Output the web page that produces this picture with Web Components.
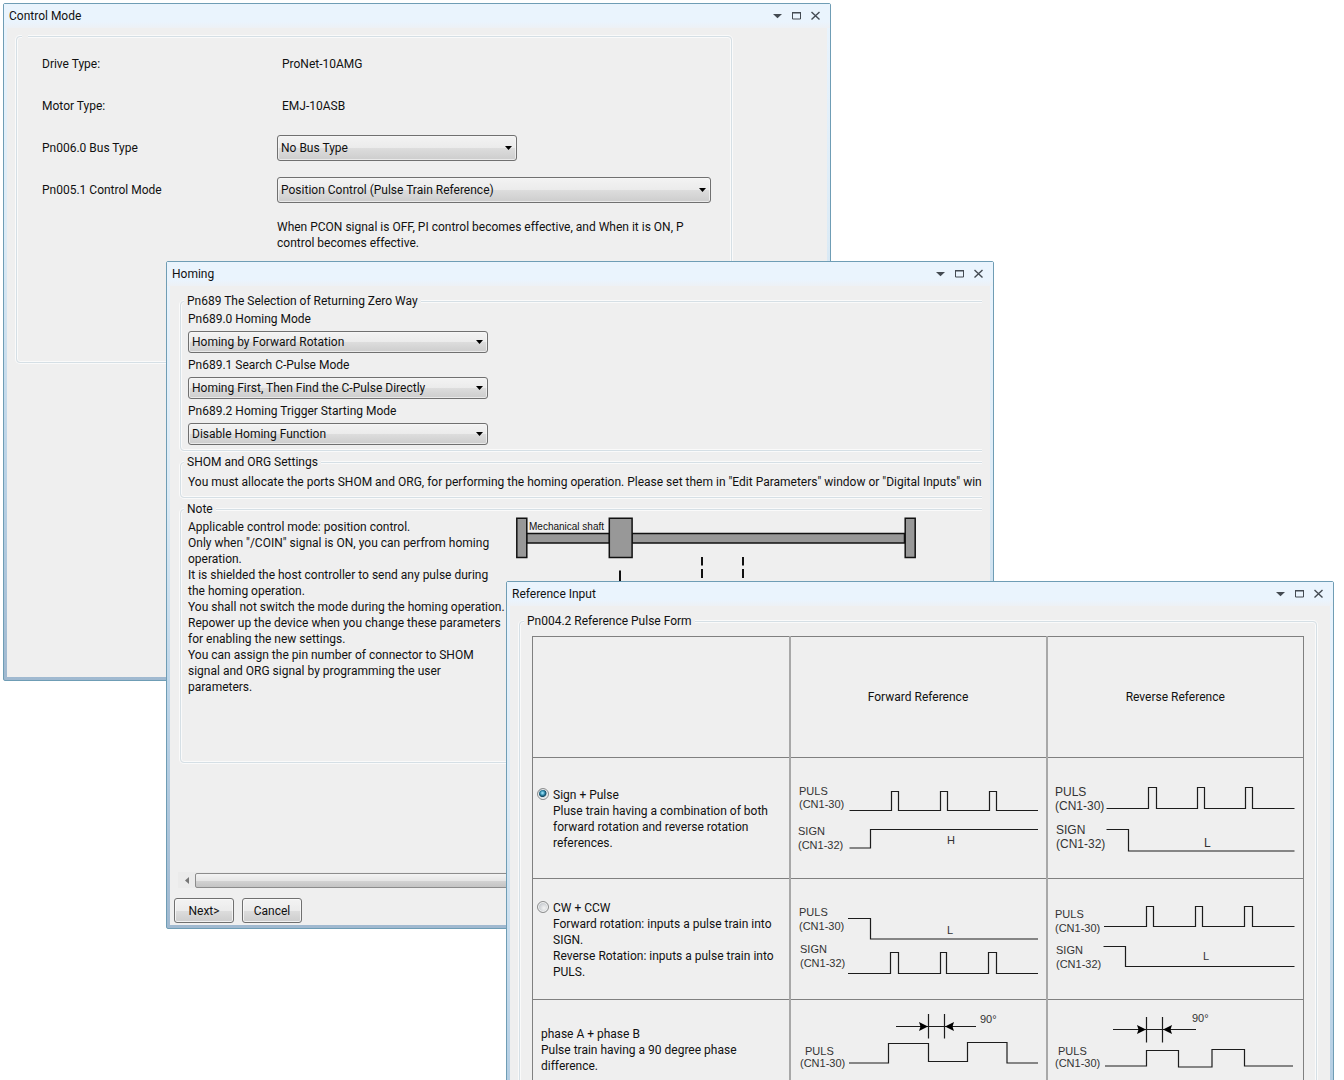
<!DOCTYPE html>
<html lang="en">
<head>
<meta charset="utf-8">
<title>Drive Setup</title>
<style>
  body { margin: 0; background: #fff; color: #111; font: 12px/16px Roboto, "Open Sans", sans-serif; }
</style>
</head>
<body>
<drive-desktop></drive-desktop>
<script>
const define = (name, html, setup) => {
  const template = document.createElement('template');
  template.innerHTML = html;
  customElements.define(name, class extends HTMLElement {
    constructor() {
      super();
      this.attachShadow({ mode: 'open' }).append(template.content.cloneNode(true));
    }
    connectedCallback() { if (setup) setup(this, this.shadowRoot); }
  });
};

/* Tool window: title bar, caption buttons and a slotted body */
define('tool-window', `
<style>
  :host { display: flex; flex-direction: column; box-sizing: border-box; border: 1px solid #6f9db5; border-radius: 2px;
    padding: 0 3px 3px; background: linear-gradient(#eaf4fd, #dcebf6 35%, #b9d2e6 70%, #a0b9d0); }
  header { display: flex; align-items: center; height: 24px; margin: 0 -3px; padding: 0 5px; background: linear-gradient(#eaf4fd 75%, #edf1f5); }
  h2 { flex: 1; margin: 0; font: inherit; }
  button { display: grid; place-items: center; width: 19px; height: 19px; padding: 0 0 1px; border: 0; background: none; color: #444b52; }
  main { flex: 1; min-height: 0; display: flex; flex-direction: column; background: #efefef; }
  svg { display: block; }
</style>
<header><h2></h2>
  <button aria-label="Menu"><svg width="9" height="9"><path d="M0 3h9L4.500 7.200z" fill="currentColor"/></svg></button>
  <button aria-label="Maximize"><svg width="9" height="9"><path d="M.5 1.500h8v6.500h-8z" fill="none" stroke="currentColor"/><path d="M0 1h9v1.500H0z" fill="currentColor"/></svg></button>
  <button aria-label="Close"><svg width="9" height="9"><path d="M.5 1l8 7.500M8.500 1L.5 8.500" stroke="currentColor" stroke-width="1.400"/></svg></button>
</header>
<main><slot></slot></main>`, (el, root) => { root.querySelector('h2').textContent = el.getAttribute('caption'); });

/* Etched frame with a caption */
define('group-box', `
<style>
  :host { display: block; }
  fieldset { box-sizing: border-box; height: 100%; min-width: 0; margin: 0; padding: var(--pad, 2px 7px 5px); border: 1px solid #d5dfe5; border-radius: 4px; box-shadow: 0 0 0 1px #fafafa, inset 0 0 0 1px #fafafa; }
  legend { margin-left: var(--legend-x, -4px); padding: 0 3px; min-height: 16px; background: #efefef; }
</style>
<fieldset><legend></legend><slot></slot></fieldset>`, (el, root) => { root.querySelector('legend').textContent = el.getAttribute('caption') || ''; });

/* Labelled drop-down; "stacked" puts the label over the list */
define('param-select', `
<style>
  :host { display: grid; grid-template-columns: 235px minmax(0, 1fr); align-items: center; --h: 26px; }
  :host([stacked]) { grid-template-columns: minmax(0, 1fr); gap: 4px; --h: 22px; }
  div { display: grid; align-items: center; max-width: var(--list-width, 100%); }
  select, svg { grid-area: 1 / 1; }
  select { appearance: none; box-sizing: border-box; width: 100%; height: var(--h); margin: 0; padding: 0 20px 0 3px; border: 1px solid #707070; border-radius: 3px;
    background: linear-gradient(#f3f3f3, #ebebeb 50%, #dddddd 50%, #cdcdcd); box-shadow: inset 0 0 0 1px #f8f8f8aa; color: inherit; font: inherit; }
  svg { justify-self: end; margin: 0 5px 1px 0; pointer-events: none; }
</style>
<label for="list"></label>
<div><select id="list"><option></option></select><svg width="7" height="4"><path d="M0 0h7L3.500 4z"/></svg></div>`, (el, root) => {
  root.querySelector('label').textContent = el.getAttribute('label');
  root.querySelector('option').textContent = el.getAttribute('value');
});

define('push-button', `
<style>
  :host { display: inline-block; }
  button { width: 60px; height: 25px; padding: 1px 0 0; border: 1px solid #707070; border-radius: 3px; background: linear-gradient(#f3f3f3, #ebebeb 50%, #dddddd 50%, #cdcdcd);
    box-shadow: inset 0 0 0 1px #fafafacc; color: inherit; font: inherit; }
</style><button><slot></slot></button>`);

define('scroll-bar', `
<style>
  :host { display: flex; align-items: center; height: 16px; background: #ebebeb; }
  button { width: 17px; height: 16px; padding: 0; border: 0; background: none; display: grid; place-items: center; }
  i { flex: 1; height: 13px; border: 1px solid #8c8c8c; border-radius: 2px; background: linear-gradient(#f3f3f3, #e6e6e6 50%, #d3d3d3 50%, #c4c4c4); }
</style>
<button aria-label="Scroll left"><svg width="4" height="7"><path d="M4 0v7L0 3.500z" fill="#777"/></svg></button><i></i>
<button aria-label="Scroll right"><svg width="4" height="7"><path d="M0 0v7l4-3.500z" fill="#777"/></svg></button>`);

define('control-mode', `
<style>
  :host { display: block; padding: 0 95px 0 9px; }
  group-box { height: 335px; --pad: 7px 20px 0 25px; --legend-x: -20px; }
  .rows { display: grid; gap: 16px; }
  .read { display: grid; grid-template-columns: 240px 1fr; align-items: center; height: 26px; }
  .short { --list-width: 240px; }
  p { margin: 0 0 0 235px; }
</style>
<group-box><div class="rows">
  <div class="read"><span>Drive Type:</span><span>ProNet-10AMG</span></div>
  <div class="read"><span>Motor Type:</span><span>EMJ-10ASB</span></div>
  <param-select class="short" label="Pn006.0 Bus Type" value="No Bus Type"></param-select>
  <param-select label="Pn005.1 Control Mode" value="Position Control (Pulse Train Reference)"></param-select>
  <p>When PCON signal is OFF, PI control becomes effective, and When it is ON, P<br>control becomes effective.</p>
</div></group-box>`);

define('shaft-diagram', `
<style>:host { display: block; } svg { display: block; overflow: visible; }</style>
<svg width="401" height="66" viewBox="516 519 401 66" role="img" aria-label="Mechanical shaft">
  <g fill="#989898" stroke="#111" stroke-width="1.500">
    <path d="M526.500 533.500h83v9.500h-83zM632 533.500h272.500v9.500H632z"/>
    <path d="M516.800 518.300h10v39.200h-10zM609.300 518.300h22.800v39.200h-22.800zM905.200 518.300h10v39.200h-10z"/>
  </g>
  <path d="M620 570.500V585M702 557v8.500M702 569v9M743 557v8.500M743 569v9" stroke="#111" stroke-width="2"/>
  <text x="529" y="530" font-family="Liberation Sans, sans-serif" font-size="10" fill="#111">Mechanical shaft</text>
</svg>`);

define('homing-setup', `
<style>
  :host { flex: 1; min-height: 0; display: flex; flex-direction: column; }
  .view { flex: 1; min-height: 0; overflow: hidden; margin: 0 8px; padding: 7px 0 0 2px; }
  .page { width: max-content; min-width: calc(100% + 60px); display: grid; gap: 3px; }
  .lists { display: grid; gap: 4px; --list-width: 300px; }
  .shom { --pad: 4px 7px 7px; }
  .note { height: 262px; }
  .cols { display: grid; grid-template-columns: 328px auto; align-items: start; }
  p { margin: 0; white-space: nowrap; }
  scroll-bar { margin: 0 8px 10px; }
  footer { display: flex; gap: 8px; padding: 0 4px 2px; }
</style>
<div class="view"><div class="page">
  <group-box caption="Pn689 The Selection of Returning Zero Way"><div class="lists">
    <param-select stacked label="Pn689.0 Homing Mode" value="Homing by Forward Rotation"></param-select>
    <param-select stacked label="Pn689.1 Search C-Pulse Mode" value="Homing First, Then Find the C-Pulse Directly"></param-select>
    <param-select stacked label="Pn689.2 Homing Trigger Starting Mode" value="Disable Homing Function"></param-select>
  </div></group-box>
  <group-box class="shom" caption="SHOM and ORG Settings"><p>You must allocate the ports SHOM and ORG, for performing the homing operation. Please set them in "Edit Parameters" window or "Digital Inputs" window.</p></group-box>
  <group-box class="note" caption="Note"><div class="cols">
    <div>
      <p>Applicable control mode: position control.</p>
      <p>Only when "/COIN" signal is ON, you can perfrom homing<br>operation.</p>
      <p>It is shielded the host controller to send any pulse during<br>the homing operation.</p>
      <p>You shall not switch the mode during the homing operation.</p>
      <p>Repower up the device when you change these parameters<br>for enabling the new settings.</p>
      <p>You can assign the pin number of connector to SHOM<br>signal and ORG signal by programming the user<br>parameters.</p>
    </div>
    <shaft-diagram></shaft-diagram>
  </div></group-box>
</div></div>
<scroll-bar></scroll-bar>
<footer><push-button>Next&gt;</push-button><push-button>Cancel</push-button></footer>`);

/* Timing diagrams: drawing area, text size, traces, labels */
const diagrams = {
  a1: ['791 759 255 119', 11, `<path d="M849.500 810.500H891.500V791.500h7v19H940.500V791.500h7v19H989.500V791.500h7v19H1038M849.500 848H870.500V829.500H1038"/>`,
    [[799,795,'PULS'],[799,808,'(CN1-30)'],[798,835,'SIGN'],[798,849,'(CN1-32)'],[947,844,'H']]],
  b1: ['1048 759 255 119', 12, `<path d="M1106.500 808.500H1148.500V787.500h8v21H1197.500V787.500h7v21H1245.500V787.500h7v21H1294.500M1106.500 829.500H1128.500V851H1294.500"/>`,
    [[1055,796,'PULS'],[1055,810,'(CN1-30)'],[1056,834,'SIGN'],[1056,848,'(CN1-32)'],[1204,847,'L']]],
  a2: ['791 880 255 119', 11, `<path d="M848 918.500H870.500V939H1038M848 973.500H890.500V952.500h8v21H940.500V952.500h6v21H988.500V952.500h8v21H1038"/>`,
    [[799,916,'PULS'],[799,930,'(CN1-30)'],[800,953,'SIGN'],[800,967,'(CN1-32)'],[947,934,'L']]],
  b2: ['1048 880 255 119', 11, `<path d="M1104 926.500H1146.500V906.500h7v20H1195.500V906.500h7v20H1244.500V906.500h8v20H1294.500M1103.500 946.500H1125.500V966.500H1294.500"/>`,
    [[1055,918,'PULS'],[1055,932,'(CN1-30)'],[1056,954,'SIGN'],[1056,968,'(CN1-32)'],[1203,960,'L']]],
  a3: ['791 1001 255 119', 11, `<path d="M896 1026.500H976M928.500 1014V1038.500M944.500 1014V1038.500M849 1063H888.500V1043.500H928.500V1061.500H967.500V1042.500H1007V1063H1038"/><path d="M928 1026.500l-9-4.500 1.500 4.500-1.500 4.500zM945 1026.500l9-4.500-1.500 4.500 1.500 4.500z" class="head"/>`,
    [[980,1023,'90°'],[805,1055,'PULS'],[800,1067,'(CN1-30)']]],
  b3: ['1048 1001 255 119', 11, `<path d="M1113 1029.500H1196M1146.500 1017V1042.500M1162.500 1017V1042.500M1105 1066H1146.500V1050.500H1178.500V1067H1212V1049.500H1244.500V1066H1293"/><path d="M1146 1029.500l-9-4.500 1.500 4.500-1.500 4.500zM1163 1029.500l9-4.500-1.500 4.500 1.500 4.500z" class="head"/>`,
    [[1192,1022,'90°'],[1058,1055,'PULS'],[1055,1067,'(CN1-30)']]],
};
define('timing-diagram', `
<style>
  :host { display: block; } svg { display: block; width: 100%; height: 119px; }
  path { fill: none; stroke: #1c1c1c; stroke-width: 1.200px; } .head { fill: #000; stroke: none; }
  text { fill: #333; font-family: "Liberation Sans", sans-serif; }
</style>`, (el, root) => {
  const [box, size, art, texts] = diagrams[el.getAttribute('kind')];
  root.innerHTML += `<svg viewBox="${box}" preserveAspectRatio="xMinYMid">${art}${texts.map(([x, y, t]) => `<text x="${x}" y="${y}" font-size="${size}">${t}</text>`).join('')}</svg>`;
});

define('reference-input', `
<style>
  :host { display: block; padding: 7px 13px 9px 9px; }
  group-box { --pad: 7px 12px 12px; --legend-x: -8px; }
  table { width: 100%; border-collapse: collapse; table-layout: fixed; border: 1px solid #808080; }
  td, th { height: 120px; padding: 0; border: 1px solid #808080; font-weight: normal; text-align: center; vertical-align: middle; }
  td + td, th, td + th { border-left: 2px solid #a8a8a8; }
  td:first-child { border-left: 1px solid #808080; text-align: left; }
  label { display: flex; align-items: start; gap: 4px; padding: 2px 0 0 4px; white-space: nowrap; }
  input { appearance: none; box-sizing: border-box; flex: none; width: 12px; height: 12px; margin: 1px 0 0; border: 1px solid #8e8f8f; border-radius: 50%;
    background: radial-gradient(circle at 60% 60%, #f4f4f4, #c9cdd1 60%); box-shadow: inset 0 0 0 1px #f4f4f4; }
  input:checked { background: radial-gradient(circle at 45% 40%, #8fd8f0 0 8%, #2c86a8 28%, #14475f 44%, #d5dde2 54%); }
  p { margin: 0; padding: 0 8px 21px; }
</style>
<group-box caption="Pn004.2 Reference Pulse Form">
  <table>
    <tr><td></td><th>Forward Reference</th><th>Reverse Reference</th></tr>
    <tr><td><label><input type="radio" name="form" checked><span>Sign + Pulse<br>Pluse train having a combination of both<br>forward rotation and reverse rotation<br>references.</span></label></td>
      <td><timing-diagram kind="a1"></timing-diagram></td><td><timing-diagram kind="b1"></timing-diagram></td></tr>
    <tr><td><label><input type="radio" name="form"><span>CW + CCW<br>Forward rotation: inputs a pulse train into<br>SIGN.<br>Reverse Rotation: inputs a pulse train into<br>PULS.</span></label></td>
      <td><timing-diagram kind="a2"></timing-diagram></td><td><timing-diagram kind="b2"></timing-diagram></td></tr>
    <tr><td><p>phase A + phase B<br>Pulse train having a 90 degree phase<br>difference.</p></td>
      <td><timing-diagram kind="a3"></timing-diagram></td><td><timing-diagram kind="b3"></timing-diagram></td></tr>
  </table>
</group-box>`);

define('drive-desktop', `
<style>
  :host { display: block; position: relative; height: 100vh; overflow: hidden; }
  tool-window { position: absolute; }
  .mode { left: 3px; right: 513px; top: 3px; min-height: 678px; }
  .homing { left: 166px; right: 350px; top: 261px; height: 668px; }
  .input { left: 506px; right: 10px; top: 581px; min-height: 668px; }
</style>
<tool-window class="mode" caption="Control Mode"><control-mode></control-mode></tool-window>
<tool-window class="homing" caption="Homing"><homing-setup></homing-setup></tool-window>
<tool-window class="input" caption="Reference Input"><reference-input></reference-input></tool-window>`);
</script>
</body>
</html>
